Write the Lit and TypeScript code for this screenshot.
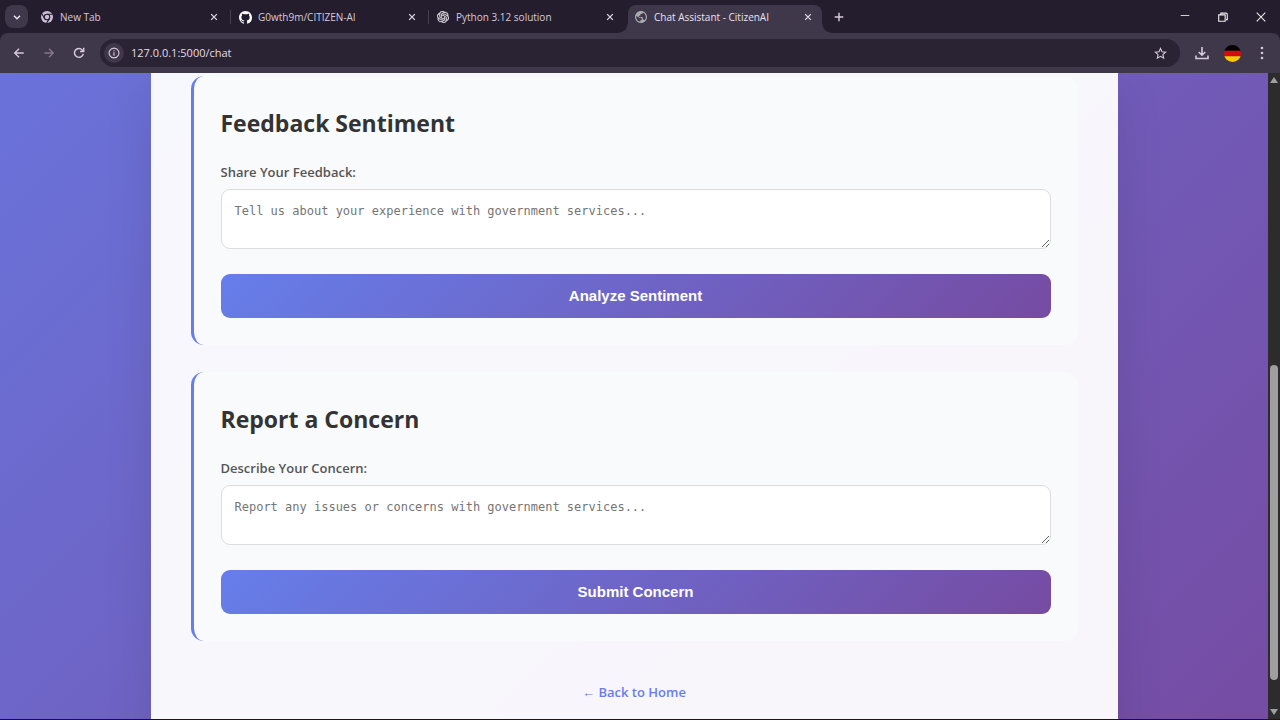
import { LitElement, html, css, svg, nothing } from "lit";
import { customElement, property } from "lit/decorators.js";

const chromeIcon = svg`<svg viewBox="0 0 24 24" width="12" height="12" aria-hidden="true">
  <circle cx="12" cy="12" r="12" fill="#cbbfd6"/>
  <g stroke="#241d2e" stroke-width="2.2" fill="none">
    <circle cx="12" cy="12" r="5.6"/>
    <path d="M12 6.4H23M7.1 14.8 1.7 5.4M16.9 14.8 11.4 24"/>
  </g></svg>`;

const githubIcon = svg`<svg viewBox="0 0 16 16" width="13" height="13" fill="#fff" aria-hidden="true"><path d="M8 0C3.58 0 0 3.58 0 8c0 3.54 2.29 6.53 5.47 7.59.4.07.55-.17.55-.38 0-.19-.01-.82-.01-1.49-2.01.37-2.53-.49-2.69-.94-.09-.23-.48-.94-.82-1.13-.28-.15-.68-.52-.01-.53.63-.01 1.08.58 1.23.82.72 1.21 1.87.87 2.33.66.07-.52.28-.87.51-1.07-1.78-.2-3.64-.89-3.64-3.95 0-.87.31-1.59.82-2.15-.08-.2-.36-1.02.08-2.12 0 0 .67-.21 2.2.82.64-.18 1.32-.27 2-.27s1.36.09 2 .27c1.53-1.04 2.2-.82 2.2-.82.44 1.1.16 1.92.08 2.12.51.56.82 1.27.82 2.15 0 3.07-1.87 3.75-3.65 3.95.29.25.54.73.54 1.48 0 1.07-.01 1.93-.01 2.2 0 .21.15.46.55.38A8.01 8.01 0 0 0 16 8c0-4.42-3.58-8-8-8z"/></svg>`;

const knotIcon = svg`<svg viewBox="0 0 24 24" width="12" height="12" fill="#e3dfe8" stroke="#e3dfe8" stroke-width=".6" aria-hidden="true"><path d="M22.2819 9.8211a5.9847 5.9847 0 0 0-.5157-4.9108 6.0462 6.0462 0 0 0-6.5098-2.9A6.0651 6.0651 0 0 0 4.9807 4.1818a5.9847 5.9847 0 0 0-3.9977 2.9 6.0462 6.0462 0 0 0 .7427 7.0966 5.98 5.98 0 0 0 .511 4.9107 6.051 6.051 0 0 0 6.5146 2.9001A5.9847 5.9847 0 0 0 13.2599 24a6.0557 6.0557 0 0 0 5.7718-4.2058 5.9894 5.9894 0 0 0 3.9977-2.9001 6.0557 6.0557 0 0 0-.7475-7.0729zm-9.022 12.6081a4.4755 4.4755 0 0 1-2.8764-1.0408l.1419-.0804 4.7783-2.7582a.7948.7948 0 0 0 .3927-.6813v-6.7369l2.02 1.1686a.071.071 0 0 1 .038.052v5.5826a4.504 4.504 0 0 1-4.4945 4.4944zm-9.6607-4.1254a4.4708 4.4708 0 0 1-.5346-3.0137l.142.0852 4.783 2.7582a.7712.7712 0 0 0 .7806 0l5.8428-3.3685v2.3324a.0804.0804 0 0 1-.0332.0615L9.74 19.9502a4.4992 4.4992 0 0 1-6.1408-1.6464zM2.3408 7.8956a4.485 4.485 0 0 1 2.3655-1.9728V11.6a.7664.7664 0 0 0 .3879.6765l5.8144 3.3543-2.0201 1.1685a.0757.0757 0 0 1-.071 0l-4.8303-2.7865A4.504 4.504 0 0 1 2.3408 7.872zm16.5963 3.8558L13.1038 8.364 15.1192 7.2a.0757.0757 0 0 1 .071 0l4.8303 2.7913a4.4944 4.4944 0 0 1-.6765 8.1042v-5.6772a.79.79 0 0 0-.407-.667zm2.0107-3.0231l-.142-.0852-4.7735-2.7818a.7759.7759 0 0 0-.7854 0L9.409 9.2297V6.8974a.0662.0662 0 0 1 .0284-.0615l4.8303-2.7866a4.4992 4.4992 0 0 1 6.6802 4.66zM8.3065 12.863l-2.02-1.1638a.0804.0804 0 0 1-.038-.0567V6.0742a4.4992 4.4992 0 0 1 7.3757-3.4537l-.142.0805L8.704 5.459a.7948.7948 0 0 0-.3927.6813zm1.0976-2.3654l2.602-1.4998 2.6069 1.4998v2.9994l-2.5974 1.4997-2.6067-1.4997Z"/></svg>`;

const globeIcon = svg`<svg viewBox="2 2 20 20" width="12" height="12" fill="#a9abb0" aria-hidden="true"><path d="M12 2C6.48 2 2 6.48 2 12s4.48 10 10 10 10-4.48 10-10S17.52 2 12 2zm-1 17.93c-3.95-.49-7-3.85-7-7.93 0-.62.08-1.21.21-1.79L9 13.2h2.6l1.6 1.5c.5.6.3 1.500-.4 1.900L11 17.500zM17.900 17.390c-.260-.810-1-1.390-1.900-1.390h-1v-3c0-.550-.450-1-1-1H8.500v-2H10c.550 0 1-.450 1-1V7h2c1.100 0 2-.900 2-2v-.410c2.930 1.190 5 4.060 5 7.410 0 2.080-.800 3.970-2.100 5.390z"/></svg>`;

const stroke = (d: string, size = 14, width = 1.5) =>
  svg`<svg viewBox="0 0 14 14" width=${size} height=${size} fill="none" stroke="currentColor" stroke-width=${width} aria-hidden="true"><path d=${d}/></svg>`;

const tabs = [
  { title: "New Tab", icon: chromeIcon, active: false, divider: true },
  { title: "G0wth9m/CITIZEN-AI", icon: githubIcon, active: false, divider: true },
  { title: "Python 3.12 solution", icon: knotIcon, active: false, divider: false },
  { title: "Chat Assistant - CitizenAI", icon: globeIcon, active: true, divider: false },
];

@customElement("browser-bar")
class BrowserBar extends LitElement {
  static styles = css`
    :host { display: block; background: #241d2e; color: #d5cadd; font: 11px/16px "Open Sans", "Noto Sans", sans-serif; }
    button, input { font: inherit; color: inherit; border: 0; padding: 0; margin: 0; background: none; }
    button { display: grid; place-items: center; flex: none; }
    svg { display: block; flex: none; }
    .strip { display: flex; align-items: flex-end; height: 33px; padding-left: 5px; }
    .search { width: 23px; height: 23px; border-radius: 8px; background: #3f374a; margin: 0 6px 5px 0; color: #e9e2ef; }
    .tabs { display: flex; }
    .tab { position: relative; display: flex; align-items: center; width: 194px; height: 28px; padding: 0 6px 4px 7px; box-sizing: border-box; border-radius: 8px 8px 0 0; }
    .tab.active { background: #3f374a; color: #e9e2ef; }
    .tab.active::before, .tab.active::after { content: ""; position: absolute; bottom: 0; width: 9px; height: 9px; }
    .tab.active::before { right: 100%; background: radial-gradient(circle at 0 0, transparent 8px, #3f374a 9px); }
    .tab.active::after { left: 100%; background: radial-gradient(circle at 100% 0, transparent 8px, #3f374a 9px); }
    .favicon { width: 19px; }
    .title { flex: 1; white-space: nowrap; font-size: 10px; }
    .close { width: 16px; height: 16px; color: #e0d8e6; }
    .divider { width: 4px; height: 14px; margin-top: 5px; display: flex; justify-content: center; }
    .divider.shown::before { content: ""; width: 1px; background: #473e52; }
    .add { width: 24px; height: 24px; margin: 0 0 4px 5px; }
    .window { display: flex; gap: 14px; margin-left: auto; padding: 0 7px 4px 0; color: #eee; }
    .window button { width: 24px; height: 24px; }
    .toolbar { display: flex; align-items: center; height: 40px; padding: 0 12px 0 6px; background: #3f374a; border-radius: 8px 8px 0 0; box-sizing: border-box; }
    .nav { width: 26px; height: 26px; margin-right: 4px; }
    .nav.dim { color: #82788d; }
    .address { flex: 1; display: flex; align-items: center; height: 28px; border-radius: 14px; background: #2a2333; padding: 0 13px 0 4px; margin: 0 10px 0 4px; }
    .info { width: 20px; height: 20px; border-radius: 50%; background: #3f374a; margin-right: 7px; }
    .url { flex: 1; min-width: 0; outline: 0; color: #e4dcea; }
    .tool { width: 24px; height: 24px; margin-right: 6px; }
    .menu { margin: 0 -6px 0 0; }
  `;
  render() {
    return html`
      <div class="strip">
        <button class="search" aria-label="Search tabs">${stroke("M3.500 5.500 7 9l3.500-3.500", 12, 1.8)}</button>
        <div class="tabs">
          ${tabs.map((t, i) => html`
            <div class="tab ${t.active ? "active" : ""}">
              <span class="favicon">${t.icon}</span><span class="title">${t.title}</span>
              <button class="close" aria-label="Close tab">${stroke("M3 3l8 8M11 3l-8 8", 10, 1.8)}</button>
            </div>
            ${i < tabs.length - 1 ? html`<span class="divider ${t.divider ? "shown" : ""}"></span>` : nothing}`)}
        </div>
        <button class="add" aria-label="New tab">${stroke("M7 2v10M2 7h10", 12, 1.7)}</button>
        <div class="window">
          <button aria-label="Minimize">${stroke("M2 5.250h10", 12, 1)}</button>
          <button aria-label="Restore">${stroke("M2 4.500h7.500v7.500H2zM4.500 4V2.500h6q1.500 0 1.500 1.500v6h-1.500", 12, 1.300)}</button>
          <button aria-label="Close">${stroke("M2 2l10 10M12 2 2 12", 12, 1.2)}</button>
        </div>
      </div>
      <div class="toolbar">
        <button class="nav" aria-label="Back">${stroke("M12.500 7H2.500M7 2 2 7l5 5", 12, 1.6)}</button>
        <button class="nav dim" aria-label="Forward">${stroke("M1.500 7h10M7 2l5 5-5 5", 12, 1.6)}</button>
        <button class="nav" aria-label="Reload">${stroke("M12 8A5.200 5.200 0 1 1 10.800 3.400L12.300 5M12.500 1v4.300H8.200", 12, 1.7)}</button>
        <div class="address">
          <button class="info" aria-label="Site information">${stroke("M7 1.300a5.700 5.700 0 1 0 .01 0zM7 6.200v4M7 3.700v1.400", 12, 1.3)}</button>
          <input class="url" aria-label="Address" .value=${"127.0.0.1:5000/chat"}>
          <button aria-label="Bookmark">${stroke("M7 1.600 8.600 5.200l3.900.400-2.900 2.600.800 3.900L7 10.100l-3.400 2 .800-3.900L1.500 5.600l3.900-.400z", 13, 1.2)}</button>
        </div>
        <button class="tool" aria-label="Downloads">${stroke("M7 1v8M3.700 6 7 9.200 10.300 6M1 9.500v3h12v-3", 14, 1.6)}</button>
        <button class="tool" aria-label="Profile">
          <svg viewBox="0 0 18 18" width="17" height="17" aria-hidden="true">
            <clipPath id="round"><circle cx="9" cy="9" r="9"/></clipPath>
            <g clip-path="url(#round)"><path d="M0 0h18v6H0z" fill="#000"/><path d="M0 6h18v6H0z" fill="#dd0710"/><path d="M0 12h18v6H0z" fill="#ffc800"/></g>
          </svg>
        </button>
        <button class="tool menu" aria-label="Menu">
          <svg viewBox="0 0 4 14" width="4" height="14" fill="currentColor" aria-hidden="true"><circle cx="2" cy="2" r="1.3"/><circle cx="2" cy="7" r="1.3"/><circle cx="2" cy="12" r="1.3"/></svg>
        </button>
      </div>`;
  }
}

@customElement("form-section")
class FormSection extends LitElement {
  @property() heading = "";
  @property() label = "";
  @property() hint = "";
  @property() action = "";
  static styles = css`
    :host { display: block; }
    .section { padding: 28px 27px 27px; border-left: 3px solid #667eea; border-radius: 13px; background: #f8fafc; }
    h2 { margin: 0 0 20px; font-size: 23px; line-height: 38px; font-weight: 700; color: #333; }
    label { display: block; margin-bottom: 7px; font-size: 13px; line-height: 20px; font-weight: 600; color: #555; }
    textarea { display: block; width: 100%; height: 60px; box-sizing: border-box; margin: 0 0 25px; padding: 13px; border: 1px solid #ddd; border-radius: 9px; background: #fff; font: 12px/16px "DejaVu Sans Mono", monospace; resize: vertical; outline: 0; }
    textarea::placeholder { color: #757575; }
    button { display: block; width: 100%; height: 44px; border: 0; border-radius: 9px; background: linear-gradient(135deg, #667eea, #764ba2); color: #fff; font: 700 15px/20px "Liberation Sans", Arial, sans-serif; }
  `;
  render() {
    return html`<form class="section" @submit=${(e: Event) => e.preventDefault()}>
      <h2>${this.heading}</h2>
      <label for="message">${this.label}</label>
      <textarea id="message" placeholder=${this.hint}></textarea>
      <button type="submit">${this.action}</button>
    </form>`;
  }
}

@customElement("app-root")
class AppRoot extends LitElement {
  static styles = css`
    :host { display: flex; flex-direction: column; height: 100vh; box-sizing: border-box; overflow: hidden; border-bottom: 1px solid #1d1518; font-family: "Open Sans", "Noto Sans", sans-serif; }
    .view { flex: 1; min-height: 0; display: flex; }
    .page { flex: 1; min-width: 0; overflow: hidden; background: linear-gradient(135deg, #667eea, #764ba2) 0 -576px / 100% 1275px; }
    .content { max-width: 967px; min-height: 100%; margin: 0 auto; box-sizing: border-box; padding: 3px 40px 40px; background: rgba(255, 255, 255, 0.95); box-shadow: 0 18px 45px rgba(0, 0, 0, 0.1); display: flex; flex-direction: column; gap: 27px; }
    .back { align-self: center; margin-top: 13px; font-size: 13px; line-height: 22px; font-weight: 600; color: #667eea; text-decoration: none; }
    .scroll { width: 12px; background: #2c2c2c; display: flex; flex-direction: column; align-items: center; padding: 4px 0; box-sizing: border-box; }
    .arrow { border: 4px solid transparent; border-top: 0; border-bottom: 6px solid #a0a0a0; }
    .arrow.down { border-top: 6px solid #a0a0a0; border-bottom: 0; }
    .before { flex: 282; }
    .thumb { flex: 314; width: 8px; border-radius: 4px; background: #9f9f9f; }
    .after { flex: 29; }
  `;
  render() {
    return html`
      <browser-bar></browser-bar>
      <div class="view">
        <div class="page">
          <main class="content">
            <form-section heading="Feedback Sentiment" label="Share Your Feedback:" hint="Tell us about your experience with government services..." action="Analyze Sentiment"></form-section>
            <form-section heading="Report a Concern" label="Describe Your Concern:" hint="Report any issues or concerns with government services..." action="Submit Concern"></form-section>
            <a class="back" href="#">← Back to Home</a>
          </main>
        </div>
        <div class="scroll" aria-hidden="true">
          <span class="arrow"></span><span class="before"></span><span class="thumb"></span><span class="after"></span><span class="arrow down"></span>
        </div>
      </div>`;
  }
}
